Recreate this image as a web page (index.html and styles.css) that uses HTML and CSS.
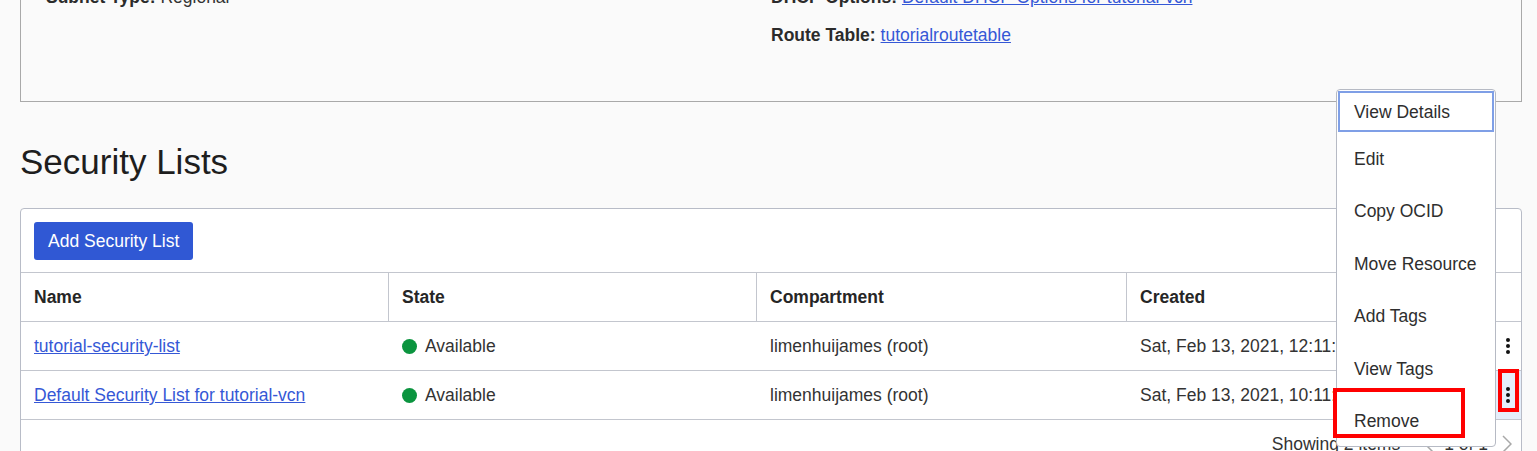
FILE: index.html
```html
<!DOCTYPE html>
<html lang="en">
<head>
<meta charset="utf-8">
<title>Security Lists</title>
<link rel="stylesheet" href="styles.css">
</head>
<body>
<div class="page">
  <section class="details">
    <div class="details-col">
      <div class="field"><span class="label">Subnet Type:</span> Regional</div>
    </div>
    <div class="details-col">
      <div class="field"><span class="label">DHCP Options:</span> <a href="#" class="link">Default DHCP Options for tutorial-vcn</a></div>
      <div class="field"><span class="label">Route Table:</span> <a href="#" class="link">tutorialroutetable</a></div>
    </div>
  </section>

  <h1 class="heading">Security Lists</h1>

  <section class="card">
    <div class="toolbar">
      <button class="btn-primary" type="button">Add Security List</button>
    </div>
    <div class="grid-row head">
      <div class="cell th sep">Name</div>
      <div class="cell th sep">State</div>
      <div class="cell th sep">Compartment</div>
      <div class="cell th sep">Created</div>
      <div class="cell"></div>
    </div>
    <div class="grid-row">
      <div class="cell"><a href="#" class="link">tutorial-security-list</a></div>
      <div class="cell"><span class="dot"></span>Available</div>
      <div class="cell">limenhuijames (root)</div>
      <div class="cell nowrap">Sat, Feb 13, 2021, 12:11:42 UTC</div>
      <div class="cell actions">
        <svg class="kebab" width="6" height="16" viewBox="0 0 6 16"><circle cx="3" cy="2" r="2"/><circle cx="3" cy="8" r="2"/><circle cx="3" cy="14" r="2"/></svg>
      </div>
    </div>
    <div class="grid-row">
      <div class="cell"><a href="#" class="link">Default Security List for tutorial-vcn</a></div>
      <div class="cell"><span class="dot"></span>Available</div>
      <div class="cell">limenhuijames (root)</div>
      <div class="cell nowrap">Sat, Feb 13, 2021, 10:11:05 UTC</div>
      <div class="cell actions active">
        <svg class="kebab" width="6" height="16" viewBox="0 0 6 16"><circle cx="3" cy="2" r="2"/><circle cx="3" cy="8" r="2"/><circle cx="3" cy="14" r="2"/></svg>
      </div>
    </div>
    <div class="grid-row footer">
      <span class="count">Showing 2 items</span>
      <svg class="chev" width="10" height="20" viewBox="0 0 10 20"><polyline points="9,2 1,10 9,18"/></svg>
      <span class="pages">1 of 1</span>
      <svg class="chev" width="10" height="20" viewBox="0 0 10 20"><polyline points="1,2 9,10 1,18"/></svg>
    </div>

    <ul class="menu">
      <li class="menu-item focused">View Details</li>
      <li class="menu-item">Edit</li>
      <li class="menu-item">Copy OCID</li>
      <li class="menu-item">Move Resource</li>
      <li class="menu-item">Add Tags</li>
      <li class="menu-item">View Tags</li>
      <li class="menu-item">Remove</li>
    </ul>
    <div class="mark mark-remove"></div>
    <div class="mark mark-kebab"></div>
  </section>
</div>
</body>
</html>
```

FILE: styles.css
```css
* { box-sizing: border-box; }

html, body {
  margin: 0;
  padding: 0;
  background: #fafafa;
  overflow: hidden;
}

body {
  font-family: "Liberation Sans", Arial, sans-serif;
  font-size: 17.5px;
  color: #333333;
  height: 451px;
}

.page {
  padding: 0 15px 0 20px;
}

.details {
  margin-top: -60px;
  border: 1px solid #a9a9a9;
  padding: 46px 25px 56px;
  display: grid;
  grid-template-columns: 1fr 1fr;
}

.field {
  line-height: 20px;
  margin-bottom: 18px;
  white-space: nowrap;
}
.field:last-child { margin-bottom: 0; }

.label {
  font-weight: bold;
  color: #2b2b2b;
}

.link {
  color: #3558d6;
  text-decoration: underline;
}

.heading {
  margin: 40px 0 26px;
  font-size: 35px;
  line-height: 40px;
  font-weight: normal;
  color: #1e1e1e;
}

.card {
  position: relative;
  background: #ffffff;
  border: 1px solid #b8bcc7;
  border-radius: 4px 4px 0 0;
  height: 300px;
}

.toolbar {
  padding: 13px 13px 12px;
}

.btn-primary {
  display: block;
  height: 38px;
  padding: 0 14px;
  border: none;
  border-radius: 3px;
  background: #3058d4;
  color: #ffffff;
  font-family: inherit;
  font-size: 17.5px;
}

.grid-row {
  display: grid;
  grid-template-columns: 368px 368px 370px 368px 26px;
  height: 49px;
  border-top: 1px solid #c3c6ce;
}

.cell {
  display: flex;
  align-items: center;
  padding-left: 13px;
  padding-top: 1px;
  overflow: hidden;
  white-space: nowrap;
}

.th {
  font-weight: bold;
  color: #262626;
}

.sep { border-right: 1px solid #c3c6ce; }

.dot {
  width: 15px;
  height: 15px;
  border-radius: 50%;
  background: #0b943f;
  margin-right: 8px;
  flex: none;
}

.actions {
  padding-left: 0;
  padding-top: 0;
  justify-content: center;
}
.actions.active { background: #e5eefa; }

.kebab { fill: #111111; }

.footer {
  display: flex;
  justify-content: flex-end;
  align-items: flex-start;
  padding: 14px 9px 0 0;
  line-height: 20px;
}

.count { margin-right: 24px; }
.pages { margin: 0 14px 0 10px; }

.chev {
  fill: none;
  stroke: #a8a8a8;
  stroke-width: 1.5;
}

.menu {
  position: absolute;
  top: -120px;
  left: 1315px;
  width: 160px;
  height: 358px;
  margin: 0;
  padding: 1px 0 0;
  list-style: none;
  background: #ffffff;
  border: 1px solid #b6bac4;
  border-radius: 4px;
}

.menu-item {
  height: 52.5px;
  display: flex;
  align-items: center;
  padding-left: 17px;
  padding-top: 2px;
  color: #2e2e2e;
  white-space: nowrap;
}

.menu-item.focused {
  height: 41px;
  margin: 0 1px;
  padding-left: 14px;
  padding-top: 1px;
  border: 2px solid #7f9fe6;
}

.mark {
  position: absolute;
  border: 4px solid #ff0000;
}

.mark-remove {
  top: 179px;
  left: 1312px;
  width: 132px;
  height: 50px;
}

.mark-kebab {
  top: 160px;
  left: 1477px;
  width: 21px;
  height: 43px;
}
```
